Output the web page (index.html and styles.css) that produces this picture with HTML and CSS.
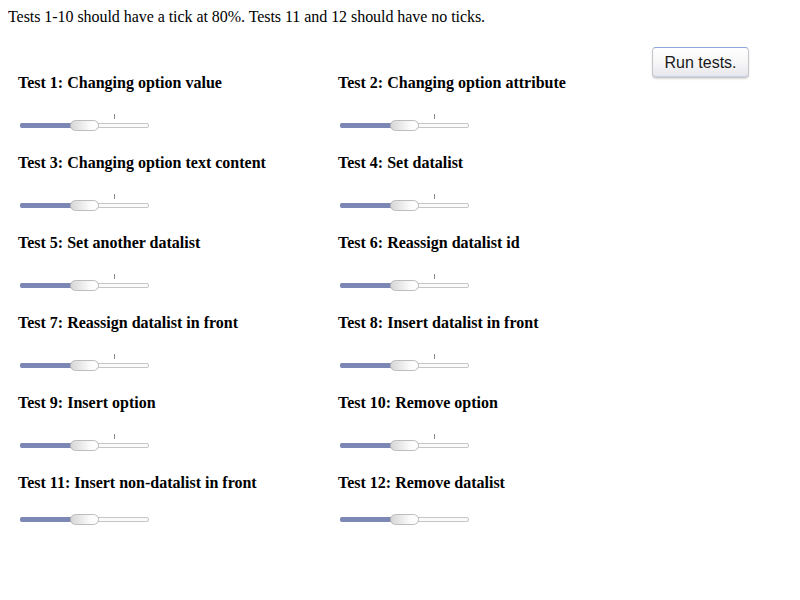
FILE: index.html
```html
<!DOCTYPE html>
<html>
<head>
<meta charset="utf-8">
<link rel="stylesheet" href="styles.css">
</head>
<body>
<p class="intro">Tests 1-10 should have a tick at 80%. Tests 11 and 12 should have no ticks.</p>
<div class="main">
  <div class="grid">
    <div class="cell"><div class="title">Test 1: Changing option value</div><div class="slider"><div class="ticks"><span class="tick"></span></div><div class="track"><div class="fill"></div><div class="thumb"></div></div></div></div>
    <div class="cell"><div class="title">Test 2: Changing option attribute</div><div class="slider"><div class="ticks"><span class="tick"></span></div><div class="track"><div class="fill"></div><div class="thumb"></div></div></div></div>
    <div class="cell"><div class="title">Test 3: Changing option text content</div><div class="slider"><div class="ticks"><span class="tick"></span></div><div class="track"><div class="fill"></div><div class="thumb"></div></div></div></div>
    <div class="cell"><div class="title">Test 4: Set datalist</div><div class="slider"><div class="ticks"><span class="tick"></span></div><div class="track"><div class="fill"></div><div class="thumb"></div></div></div></div>
    <div class="cell"><div class="title">Test 5: Set another datalist</div><div class="slider"><div class="ticks"><span class="tick"></span></div><div class="track"><div class="fill"></div><div class="thumb"></div></div></div></div>
    <div class="cell"><div class="title">Test 6: Reassign datalist id</div><div class="slider"><div class="ticks"><span class="tick"></span></div><div class="track"><div class="fill"></div><div class="thumb"></div></div></div></div>
    <div class="cell"><div class="title">Test 7: Reassign datalist in front</div><div class="slider"><div class="ticks"><span class="tick"></span></div><div class="track"><div class="fill"></div><div class="thumb"></div></div></div></div>
    <div class="cell"><div class="title">Test 8: Insert datalist in front</div><div class="slider"><div class="ticks"><span class="tick"></span></div><div class="track"><div class="fill"></div><div class="thumb"></div></div></div></div>
    <div class="cell"><div class="title">Test 9: Insert option</div><div class="slider"><div class="ticks"><span class="tick"></span></div><div class="track"><div class="fill"></div><div class="thumb"></div></div></div></div>
    <div class="cell"><div class="title">Test 10: Remove option</div><div class="slider"><div class="ticks"><span class="tick"></span></div><div class="track"><div class="fill"></div><div class="thumb"></div></div></div></div>
    <div class="cell"><div class="title">Test 11: Insert non-datalist in front</div><div class="slider"><div class="track"><div class="fill"></div><div class="thumb"></div></div></div></div>
    <div class="cell"><div class="title">Test 12: Remove datalist</div><div class="slider"><div class="track"><div class="fill"></div><div class="thumb"></div></div></div></div>
  </div>
  <button class="run">Run tests.</button>
</div>
</body>
</html>
```

FILE: styles.css
```css
html, body {
  background: #fff;
}
body {
  margin: 8px;
  font-family: "Liberation Serif", "Times New Roman", serif;
  font-size: 16px;
  color: #000;
}
.intro {
  margin: 0;
  line-height: 18px;
  letter-spacing: -0.05px;
}
.main {
  display: flex;
  align-items: flex-start;
}
.grid {
  display: grid;
  grid-template-columns: 320px 300px;
  grid-auto-rows: 80px;
  margin-left: 10px;
  padding-top: 48px;
}
.title {
  font-weight: bold;
  line-height: 18px;
  white-space: nowrap;
}
.slider {
  margin-top: 22px;
  margin-left: 2px;
  width: 129px;
}
.ticks {
  position: relative;
  height: 6px;
}
.tick {
  position: absolute;
  left: 94px;
  top: 0;
  width: 1px;
  height: 5px;
  background: #8a8a8a;
}
.track {
  position: relative;
  height: 11px;
}
.track::before {
  content: "";
  position: absolute;
  left: 0;
  right: 0;
  top: 3px;
  height: 5px;
  box-sizing: border-box;
  border: 1px solid #c6c6c6;
  border-radius: 2px;
  background: #fafafa;
}
.fill {
  position: absolute;
  left: 0;
  top: 3px;
  width: 54px;
  height: 5px;
  border-radius: 2px 0 0 2px;
  background: #7c87b6;
}
.thumb {
  position: absolute;
  left: 50px;
  top: 0;
  width: 27px;
  height: 9px;
  border: 1px solid #bcbcbc;
  border-radius: 6px;
  background: linear-gradient(to right, #d6d6d6, #fbfbfb 70%, #ffffff);
}
.run {
  margin-left: auto;
  margin-top: 21px;
  margin-right: 43px;
  width: 97px;
  height: 31px;
  padding: 0;
  font-family: "Liberation Sans", Arial, sans-serif;
  font-size: 16px;
  color: #1a1a1a;
  border: 1px solid #c8c8c8;
  border-top-color: #8fa6dd;
  border-radius: 4px;
  background: linear-gradient(#ffffff, #f5f5f7 55%, #e6e6ec);
  box-shadow: 0 1px 2px rgba(0, 0, 0, 0.15), inset 0 -1px 1px rgba(120, 140, 220, 0.25);
}
```
